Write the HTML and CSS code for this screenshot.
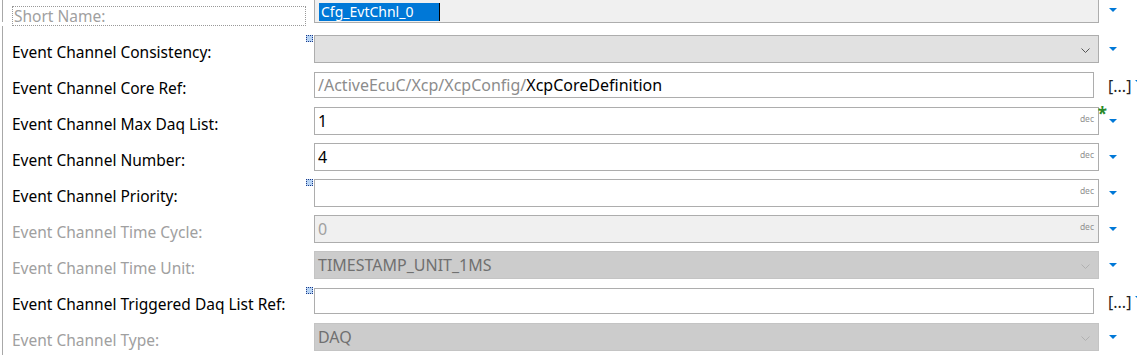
FILE: index.html
```html
<!DOCTYPE html>
<html lang="en">
  <head>
    <meta charset="UTF-8" />
    <title>Event Channel</title>
    <link rel="stylesheet" href="styles.css">
  </head>
  <body>
    <div class="top">
      <span class="rail"></span>
      <div class="short-label">Short Name:</div>
      <div class="short-field">
        <span class="sel">Cfg_EvtChnl_0</span><span class="caret"></span>
      </div>
      <span class="drop"></span>
    </div>
    <div class="list">
      <!-- Consistency -->
      <div class="row">
        <label>Event Channel Consistency:</label>
        <span class="mark"></span>
        <div class="field select">
          <svg class="chev" width="9" height="5" viewBox="0 0 9 5"><path d="M0.5 0.5 L4.5 4.5 L8.5 0.5" fill="none" stroke="#555" stroke-width="1"/></svg>
        </div>
        <span class="drop"></span>
      </div>
      <!-- Core Ref -->
      <div class="row">
        <label>Event Channel Core Ref:</label>
        <span></span>
        <div class="field ref"><span class="path">/ActiveEcuC/Xcp/XcpConfig/</span>XcpCoreDefinition</div>
        <span class="dots">[...]<span class="drop cut"></span></span>
      </div>
      <!-- Max Daq List -->
      <div class="row">
        <label>Event Channel Max Daq List:</label>
        <span></span>
        <div class="field">1<span class="dec">dec</span><span class="star">*</span></div>
        <span class="drop"></span>
      </div>
      <div class="row">
        <label>Event Channel Number:</label>
        <span></span>
        <div class="field">4<span class="dec">dec</span></div>
        <span class="drop"></span>
      </div>
      <div class="row">
        <label>Event Channel Priority:</label>
        <span class="mark"></span>
        <div class="field"><span class="dec">dec</span></div>
        <span class="drop"></span>
      </div>
      <div class="row off">
        <label>Event Channel Time Cycle:</label>
        <span></span>
        <div class="field ro">0<span class="dec">dec</span></div>
        <span class="drop"></span>
      </div>
      <div class="row off">
        <label>Event Channel Time Unit:</label>
        <span></span>
        <div class="field select dis">TIMESTAMP_UNIT_1MS
          <svg class="chev" width="9" height="5" viewBox="0 0 9 5"><path d="M0.5 0.5 L4.5 4.5 L8.5 0.5" fill="none" stroke="#b0b0b0" stroke-width="1"/></svg>
        </div>
        <span class="drop"></span>
      </div>
      <div class="row">
        <label>Event Channel Triggered Daq List Ref:</label>
        <span class="mark"></span>
        <div class="field ref"></div>
        <span class="dots">[...]<span class="drop cut"></span></span>
      </div>
      <div class="row off">
        <label>Event Channel Type:</label>
        <span></span>
        <div class="field select dis">DAQ
          <svg class="chev" width="9" height="5" viewBox="0 0 9 5"><path d="M0.5 0.5 L4.5 4.5 L8.5 0.5" fill="none" stroke="#b0b0b0" stroke-width="1"/></svg>
        </div>
        <span class="drop"></span>
      </div>
    </div>
  </body>
</html>
```
FILE: styles.css
```css
:root {
  --border-color: #adadad;
  --muted-color: #a0a0a0;
  --blue-color: #0078d7;
  --font-family: "Noto Sans", "Open Sans", sans-serif;
}
* {
  margin: 0;
  padding: 0;
  box-sizing: border-box;
}
body {
  background: #fff;
  font-family: var(--font-family);
  font-size: 15.5px;
  color: #000;
  overflow: hidden;
  height: 355px;
}
.top {
  height: 26px;
  display: grid;
  grid-template-columns: 10px 294px 8px 785px auto;
  align-items: start;
  margin-left: 2px;
}
.rail {
  width: 1px;
  height: 22px;
  background: #a8a8a8;
}
.short-label {
  margin-top: 6px;
  height: 20px;
  border: 1px dotted #999;
  color: var(--muted-color);
  line-height: 18px;
  padding-left: 1px;
}
.short-field {
  grid-column: 4;
  height: 23px;
  background: #f0f0f0;
  border: 1px solid var(--border-color);
  border-top: none;
  display: flex;
  align-items: flex-start;
  padding: 3px 0 0 4px;
}
.sel {
  background: var(--blue-color);
  color: #fff;
  height: 18px;
  width: 120px;
  font-size: 14px;
  line-height: 18px;
  overflow: hidden;
  padding-left: 2px;
}
.caret {
  width: 1px;
  height: 18px;
  background: #000;
}
.top .drop {
  margin-top: 8px;
}
.list {
  margin-left: 2px;
  border-left: 1px solid #a8a8a8;
  padding: 5px 0 0 9px;
}
.row {
  height: 36px;
  display: grid;
  grid-template-columns: 294px 8px 785px auto;
  align-items: center;
}
.row label {
  line-height: 20px;
  padding-top: 6px;
}
.row.off label {
  color: var(--muted-color);
}
.mark {
  align-self: start;
  margin-top: 4px;
  width: 7px;
  height: 7px;
  border: 1px dotted #1a3a8a;
  background: #b8d4f4;
}
.field {
  position: relative;
  height: 28px;
  border: 1px solid var(--border-color);
  background: #fff;
  padding-left: 3px;
  font-size: 16px;
  line-height: 26px;
  white-space: nowrap;
}
.field.ref {
  width: 780px;
  height: 26px;
  line-height: 24px;
}
.path {
  color: #8c8c8c;
}
.field.select {
  background: #e1e1e1;
}
.field.dis {
  background: #cccccc;
  border-color: #c4c4c4;
  color: #707070;
}
.field.ro {
  background: #f0f0f0;
  color: var(--muted-color);
}
.chev {
  position: absolute;
  right: 8px;
  top: 12px;
}
.dec {
  position: absolute;
  right: 4px;
  top: 6px;
  font-size: 8.5px;
  line-height: 9px;
  color: #909090;
}
.star {
  position: absolute;
  right: -9px;
  top: -3px;
  color: #2a8a2a;
  font-size: 17px;
  font-weight: bold;
  line-height: 17px;
}
.drop {
  justify-self: start;
  margin-left: 10px;
  width: 0;
  height: 0;
  border-left: 4px solid transparent;
  border-right: 4px solid transparent;
  border-top: 4px solid var(--blue-color);
}
.dots {
  display: flex;
  align-items: center;
  margin-left: 9px;
  color: #222;
  font-size: 16px;
  padding-top: 2px;
}
.drop.cut {
  margin-left: 4px;
  margin-top: -8px;
}
```
